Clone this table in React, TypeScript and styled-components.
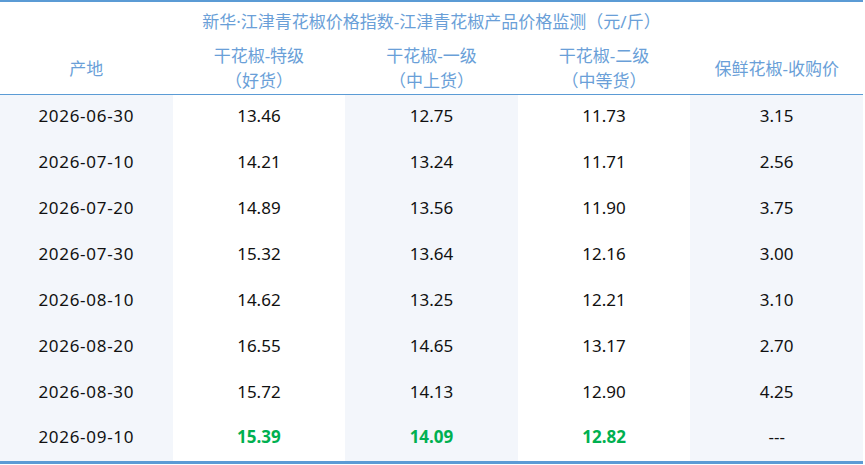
import styled, { createGlobalStyle } from 'styled-components';

const GlobalStyle = createGlobalStyle`
  html, body {
    margin: 0;
    padding: 0;
    background: #ffffff;
  }
  body {
    font-family: "Noto Sans", "Noto Sans CJK SC", sans-serif;
  }
`

const Table = styled.table`
  width: 863px;
  border-collapse: collapse;
  table-layout: fixed;
  border-top: 2px solid #5b9bd5;
  border-bottom: 3px solid #5b9bd5;
  font-size: 17px;
`

const TitleRow = styled.tr`
  height: 37px;
`

const TitleCell = styled.th`
  padding: 0;
  font-weight: normal;
  color: #6a9fd8;
  text-align: center;
  vertical-align: middle;
`

const HeadRow = styled.tr`
  height: 56px;
`

const HeadCell = styled.th`
  padding: 5px 0 0;
  font-weight: normal;
  color: #6a9fd8;
  line-height: 25px;
  text-align: center;
  vertical-align: middle;
  border-bottom: 1px solid #5b9bd5;
`

const Row = styled.tr`
  height: 46px;
`

const Cell = styled.td<{ $shade?: boolean; $latest?: boolean; $date?: boolean }>`
  padding: 0 0 4px;
  text-align: center;
  vertical-align: middle;
  letter-spacing: ${p => (p.$date ? '0.7px' : '0')};
  color: ${p => (p.$latest ? '#00b050' : '#111111')};
  font-weight: ${p => (p.$latest ? 700 : 400)};
  background: ${p => (p.$shade ? '#f3f6fb' : '#ffffff')};
`

const rows: string[][] = [
  ['2026-06-30', '13.46', '12.75', '11.73', '3.15'],
  ['2026-07-10', '14.21', '13.24', '11.71', '2.56'],
  ['2026-07-20', '14.89', '13.56', '11.90', '3.75'],
  ['2026-07-30', '15.32', '13.64', '12.16', '3.00'],
  ['2026-08-10', '14.62', '13.25', '12.21', '3.10'],
  ['2026-08-20', '16.55', '14.65', '13.17', '2.70'],
  ['2026-08-30', '15.72', '14.13', '12.90', '4.25'],
  ['2026-09-10', '15.39', '14.09', '12.82', '---'],
]

const App = () => {
  return (
    <>
      <GlobalStyle />
      <Table>
        <thead>
          <TitleRow>
            <TitleCell colSpan={5}>新华·江津青花椒价格指数-江津青花椒产品价格监测（元/斤）</TitleCell>
          </TitleRow>
          <HeadRow>
            <HeadCell>产地</HeadCell>
            <HeadCell>干花椒-特级<br />（好货）</HeadCell>
            <HeadCell>干花椒-一级<br />（中上货）</HeadCell>
            <HeadCell>干花椒-二级<br />（中等货）</HeadCell>
            <HeadCell>保鲜花椒-收购价</HeadCell>
          </HeadRow>
        </thead>
        <tbody>
          {rows.map((r, i) => {
            const last = i === rows.length - 1
            return (
              <Row key={r[0]}>
                {r.map((v, j) => (
                  <Cell
                    key={j}
                    $shade={j % 2 === 0}
                    $date={j === 0}
                    $latest={last && j > 0 && j < 4}
                  >
                    {v}
                  </Cell>
                ))}
              </Row>
            )
          })}
        </tbody>
      </Table>
    </>
  )
}

export default App
